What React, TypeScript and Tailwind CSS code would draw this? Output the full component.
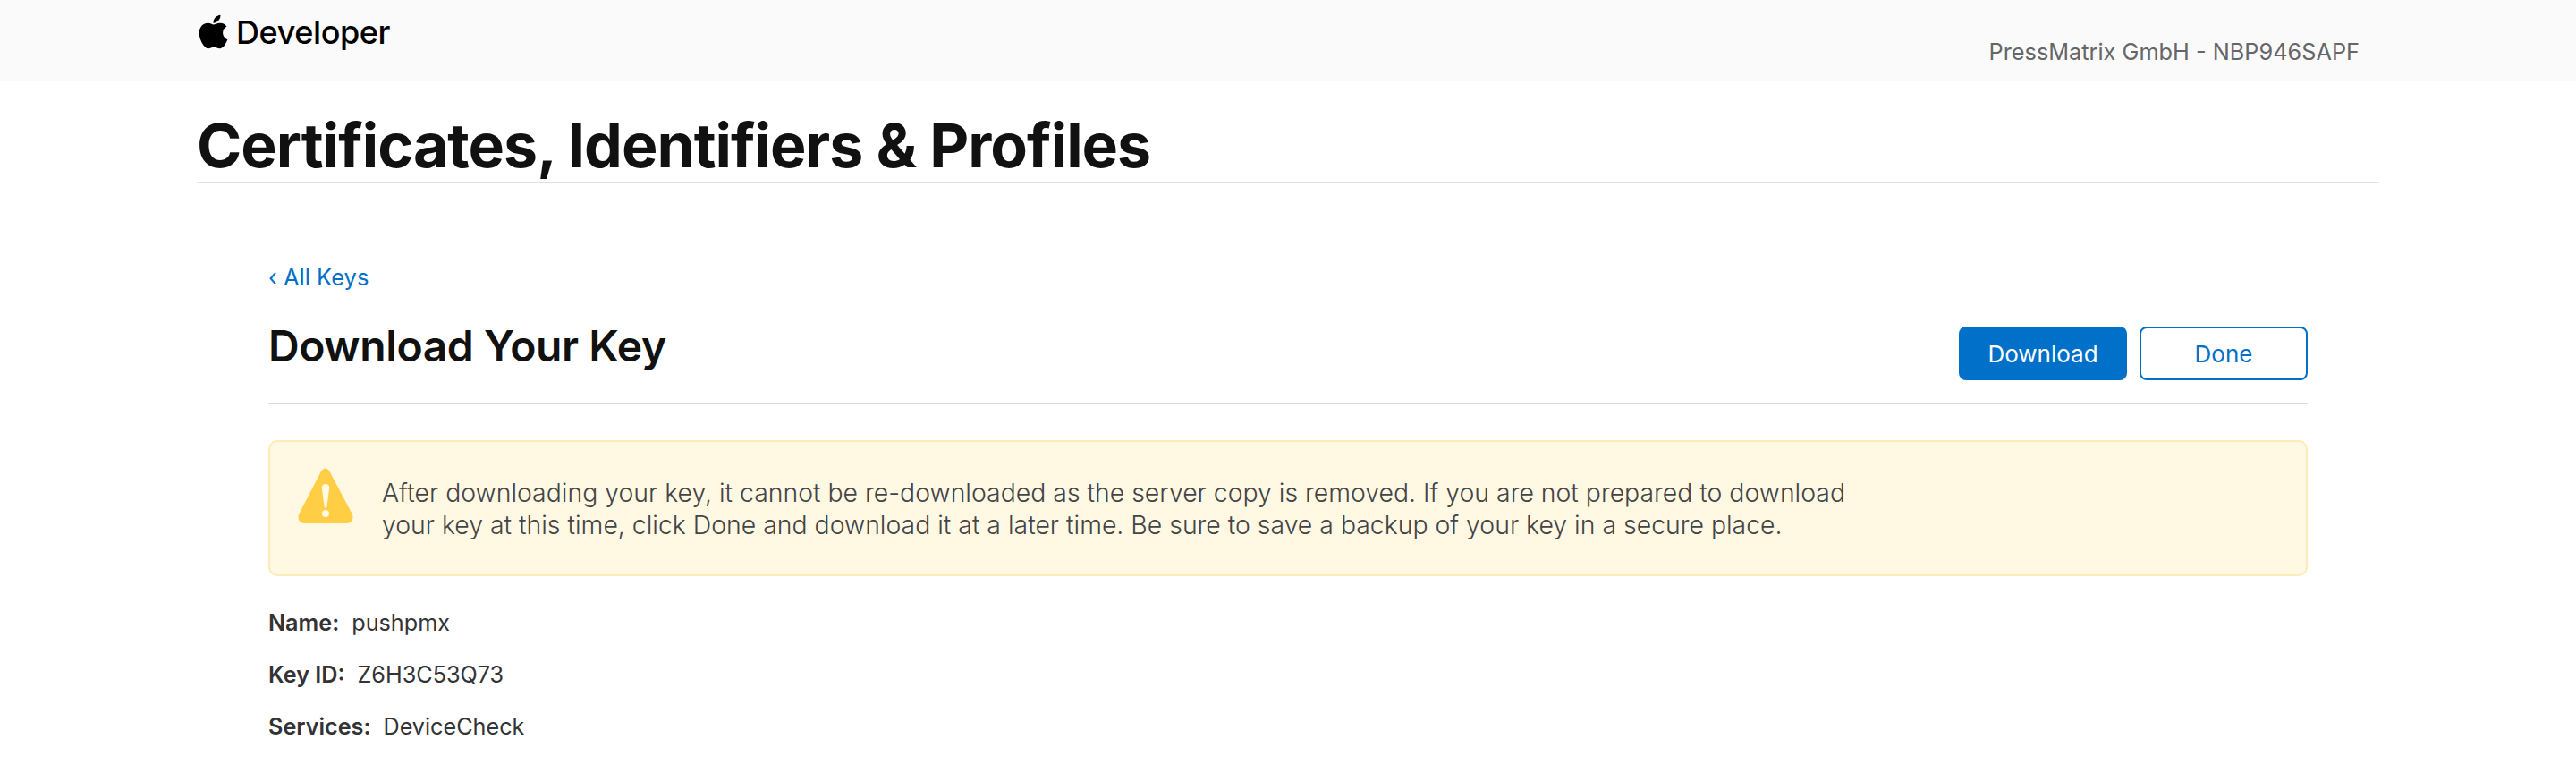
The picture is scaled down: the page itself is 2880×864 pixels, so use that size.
import { FaApple } from "react-icons/fa";

function Detail({ label, value }: { label: string; value: string }) {
  return (
    <p className="h-[58px] text-[25.2px] leading-[58px] text-[#333336]">
      <span className="font-semibold">{label}:</span>
      <span className="ml-[14px]">{value}</span>
    </p>
  );
}

function WarningIcon() {
  return (
    <svg width="62" height="62" viewBox="0 0 62 62" className="mb-[28px] shrink-0">
      <path
        d="M26 4C28.500-.8 33-.8 35.500 4L60.500 51C63.300 56.400 60 62 55 62H7C2 62-1.300 56.400 1.500 51Z"
        fill="#ffce44"
      />
      <path d="M26.700 22c0-2.500 1.900-4 4.300-4s4.300 1.500 4.300 4l-2.800 21c-.2 1.200-.7 1.800-1.500 1.800s-1.300-.6-1.500-1.800z" fill="#fff8e3" />
      <circle cx="31" cy="51" r="4" fill="#fff8e3" />
    </svg>
  );
}

export default function App() {
  return (
    <div className="h-[864px] overflow-hidden bg-white font-['Inter',sans-serif] text-[#111112]">
      <header className="h-[91px] bg-[#fafafa] px-[220px]">
        <div className="flex h-full items-start justify-between pr-[22px]">
          <div className="flex items-center pt-[13px]">
            <FaApple className="mb-[2px] ml-[-3px] text-[43px] text-black" />
            <span className="ml-[4px] text-[36px] font-medium leading-[46px] tracking-[-0.4px] text-black">Developer</span>
          </div>
          <span className="pt-[44px] text-[25.3px] leading-[28px] text-[#666668]">PressMatrix GmbH - NBP946SAPF</span>
        </div>
      </header>

      <div className="mx-[220px] h-[114px] border-b-2 border-[#e2e2e3] pt-[37px]">
        <h1 className="text-[68px] font-bold leading-[68px] tracking-[-1px]">Certificates, Identifiers &amp; Profiles</h1>
      </div>

      <main className="mx-[300px] pt-[90px]">
        <a className="block h-[30px] text-[25.5px] leading-[30px] text-[#0070c9]">‹ All Keys</a>
        <div className="flex h-[127px] items-start justify-between border-b-2 border-[#dcdcde]">
          <h2 className="pt-[34px] text-[48px] font-semibold leading-[56px] tracking-[-0.4px]">Download Your Key</h2>
          <div className="flex gap-[14px] pt-[40px]">
            <button className="h-[60px] w-[188px] rounded-[8px] bg-[#0070c9] text-[26px] text-white">Download</button>
            <button className="h-[60px] w-[188px] rounded-[8px] border-2 border-[#0070c9] bg-white text-[26px] text-[#0070c9]">Done</button>
          </div>
        </div>

        <div className="mt-[40px] flex h-[152px] items-center rounded-[10px] border-2 border-[#fdecb8] bg-[#fff8e3] pl-[31px]">
          <WarningIcon />
          <p className="ml-[32px] w-[1800px] pt-[2px] text-[28.4px] font-light leading-[36px] text-[#444446]">
            After downloading your key, it cannot be re-downloaded as the server copy is removed. If you are not prepared to download<br />
            your key at this time, click Done and download it at a later time. Be sure to save a backup of your key in a secure place.
          </p>
        </div>

        <div className="pt-[23px]">
          <Detail label="Name" value="pushpmx" />
          <Detail label="Key ID" value="Z6H3C53Q73" />
          <Detail label="Services" value="DeviceCheck" />
        </div>
      </main>
    </div>
  );
}
